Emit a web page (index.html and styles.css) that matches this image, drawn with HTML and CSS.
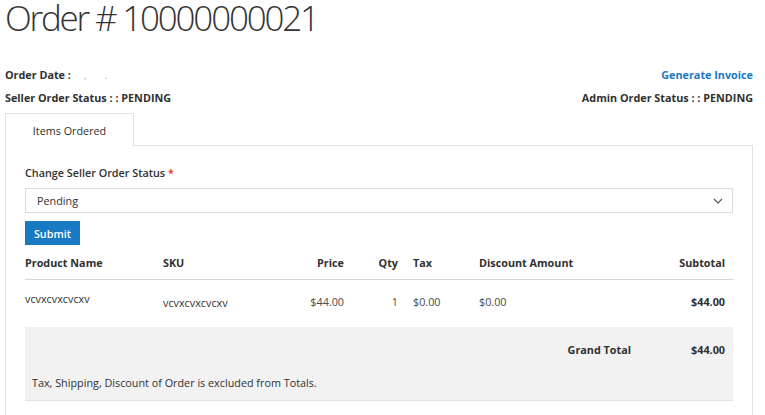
FILE: index.html
```html
<!DOCTYPE html>
<html>
<head>
<meta charset="utf-8">
<link rel="stylesheet" href="styles.css">
</head>
<body>
<div class="page">
  <h1 class="title">Order # 10000000021</h1>
  <div class="meta">
    <div class="meta-row">
      <span class="meta-label">Order Date :<span class="dot d1">,</span><span class="dot d2">.</span></span>
      <a class="invoice" href="#">Generate Invoice</a>
    </div>
    <div class="meta-row">
      <span class="meta-label">Seller Order Status : : PENDING</span>
      <span class="meta-label">Admin Order Status : : PENDING</span>
    </div>
  </div>
  <div class="tabs">
    <div class="tab">Items Ordered</div>
  </div>
  <div class="panel">
    <div class="field-label">Change Seller Order Status <span class="req">*</span></div>
    <div class="select">
      <span>Pending</span>
      <svg class="chev" width="10" height="6" viewBox="0 0 10 6"><path d="M1 1 L5 5 L9 1" fill="none" stroke="#555" stroke-width="1.2"/></svg>
    </div>
    <button class="btn">Submit</button>
    <table class="items">
      <thead>
        <tr>
          <th class="c-name">Product Name</th>
          <th class="c-sku">SKU</th>
          <th class="c-price r">Price</th>
          <th class="c-qty r">Qty</th>
          <th class="c-tax">Tax</th>
          <th class="c-disc">Discount Amount</th>
          <th class="c-sub r">Subtotal</th>
        </tr>
      </thead>
      <tbody>
        <tr>
          <td class="c-name small"><span class="up">vcvxcvxcvcxv</span></td>
          <td class="c-sku small"><span class="down">vcvxcvxcvcxv</span></td>
          <td class="c-price r">$44.00</td>
          <td class="c-qty r">1</td>
          <td class="c-tax">$0.00</td>
          <td class="c-disc">$0.00</td>
          <td class="c-sub r b">$44.00</td>
        </tr>
      </tbody>
      <tfoot>
        <tr class="gt">
          <td colspan="6" class="gt-label">Grand Total</td>
          <td class="gt-val r b">$44.00</td>
        </tr>
        <tr class="note">
          <td colspan="7">Tax, Shipping, Discount of Order is excluded from Totals.</td>
        </tr>
      </tfoot>
    </table>
  </div>
</div>
</body>
</html>
```
FILE: styles.css
```css
html, body {
  margin: 0;
  padding: 0;
  background: #fff;
}
body {
  font-family: "Open Sans", "Noto Sans", sans-serif;
  font-size: 10.8px;
  color: #303030;
}
.page {
  padding: 0 12px 0 5px;
}
.title {
  margin: 0;
  font-size: 35px;
  font-weight: 300;
  letter-spacing: -2.2px;
  line-height: 36px;
  color: #333;
  white-space: nowrap;
}
.meta {
  margin-top: 27px;
}
.meta-row {
  display: flex;
  justify-content: space-between;
  align-items: center;
  height: 23px;
}
.meta-label {
  font-weight: 700;
  font-size: 10.8px;
  color: #303030;
}
.dot {
  color: #c4c4c4;
  font-weight: 400;
}
.d1 { margin-left: 13px; }
.d2 { margin-left: 18px; }
.invoice {
  font-weight: 700;
  font-size: 10.8px;
  color: #1979c3;
  text-decoration: none;
}
.tabs {
  margin-top: 4px;
  display: flex;
}
.tab {
  width: 127px;
  height: 32px;
  border: 1px solid #e3e3e3;
  border-bottom: none;
  background: #fff;
  display: flex;
  align-items: center;
  justify-content: center;
  font-size: 10.8px;
  color: #303030;
  position: relative;
  z-index: 1;
  margin-bottom: -1px;
}
.panel {
  border: 1px solid #e3e3e3;
  border-bottom: none;
  padding: 17px 19px 20px 19px;
}
.field-label {
  font-weight: 600;
  font-size: 10.8px;
  line-height: 20px;
}
.req {
  color: #e22626;
}
.select {
  margin-top: 5px;
  height: 23px;
  border: 1px solid #dcdcdc;
  display: flex;
  align-items: center;
  justify-content: space-between;
  padding: 0 9px 0 11px;
  font-size: 10.8px;
}
.chev {
  display: block;
}
.btn {
  display: block;
  margin-top: 8px;
  height: 24px;
  width: 55px;
  padding: 0;
  border: none;
  background: #1979c3;
  color: #fff;
  font-family: "Open Sans", "Noto Sans", sans-serif;
  font-weight: 600;
  font-size: 10.8px;
}
.items {
  width: 100%;
  border-collapse: collapse;
  margin-top: 5px;
}
.items th {
  text-align: left;
  font-weight: 700;
  font-size: 10.8px;
  padding: 3px 0 6px 0;
  border-bottom: 1px solid #d6d6d6;
  line-height: 20px;
}
.items td {
  padding: 0;
  font-size: 10.8px;
  line-height: 18px;
  color: #4a4a4a;
}
.items tbody td {
  height: 47px;
  vertical-align: top;
  padding-top: 13px;
  box-sizing: border-box;
}
.items .r { text-align: right; }
.items .b { font-weight: 700; color: #303030; }
.c-name { width: 138px; }
.c-sku { width: 128px; }
.c-price { width: 53px; }
.c-qty { width: 54px; }
.c-tax { width: 66px; padding-left: 15px !important; }
.c-sub { width: 90px; padding-right: 8px !important; }
.items td.small { color: #303030; }
.up { position: relative; top: -3px; }
.down { position: relative; top: 1px; }
.gt td {
  background: #f2f2f2;
  height: 46px;
  vertical-align: middle;
  white-space: nowrap;
}
.gt-label {
  font-weight: 700;
  text-align: right;
  color: #303030 !important;
  padding-right: 4px !important;
}
.gt-val { padding-right: 8px !important; }
.note td {
  background: #f2f2f2;
  padding: 1px 0 8px 7px;
  height: 26px;
  box-sizing: border-box;
  vertical-align: top;
  color: #303030;
  border-bottom: 1px solid #e3e3e3;
}
```
